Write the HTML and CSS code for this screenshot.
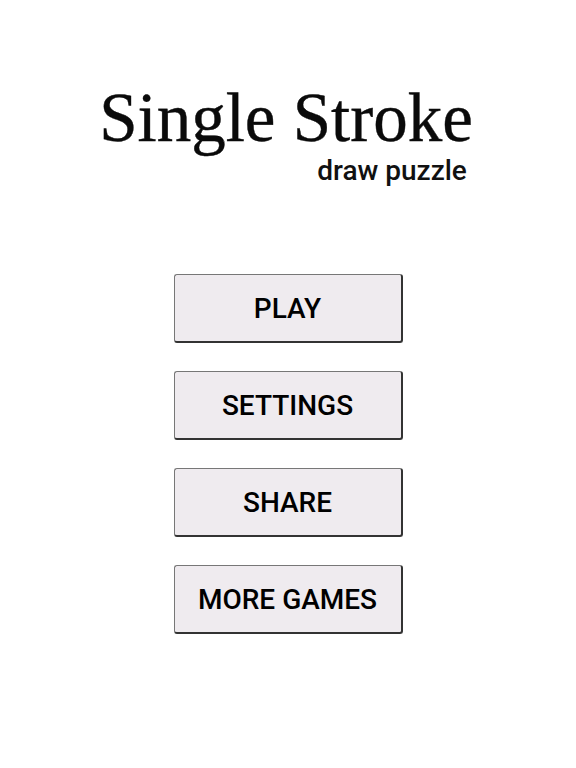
FILE: index.html
```html
<!DOCTYPE html>
<html lang="en">
<head>
    <meta charset="UTF-8">
    <meta name="viewport" content="width=device-width, initial-scale=1.0">
    <title>Single Stroke</title>
    <link rel="stylesheet" href="styles.css">
</head>
<body>
    <div class="menu">
        <div class="titulo">
            <h1>Single Stroke</h1>
            <p class="subtitulo">draw puzzle</p>
        </div>
        <div class="botones">
            <button class="boton">PLAY</button>
            <button class="boton">SETTINGS</button>
            <button class="boton">SHARE</button>
            <button class="boton">MORE GAMES</button>
        </div>
    </div>
</body>
</html>
```

FILE: styles.css
```css
body {
    margin: 0;
    background-color: #ffffff;
    font-family: 'Roboto', sans-serif;
    color: #000;
}
.menu {
    display: flex;
    flex-direction: column;
    align-items: center;
    padding-top: 80px;
}
.titulo {
    display: flex;
    flex-direction: column;
    align-items: flex-end;
    margin-right: 4px;
}
h1 {
    margin: 0;
    font-family: 'Liberation Serif', serif;
    font-weight: normal;
    font-size: 69px;
    line-height: 76px;
    color: #0a0a0a;
    -webkit-text-stroke: 0.4px #0a0a0a;
}
.subtitulo {
    margin: 0 6px 0 0;
    font-size: 28px;
    line-height: 30px;
    font-weight: 500;
    color: #111;
}
.botones {
    display: flex;
    flex-direction: column;
    gap: 28px;
    margin-top: 88px;
}
.boton {
    width: 229px;
    height: 69px;
    box-sizing: border-box;
    background-color: #efebef;
    border: 1px solid #777;
    border-right: 2px solid #333;
    border-bottom: 2px solid #333;
    border-radius: 3px;
    font-family: 'Roboto', sans-serif;
    font-size: 28px;
    font-weight: 500;
    color: #000;
    padding: 0;
}
```
